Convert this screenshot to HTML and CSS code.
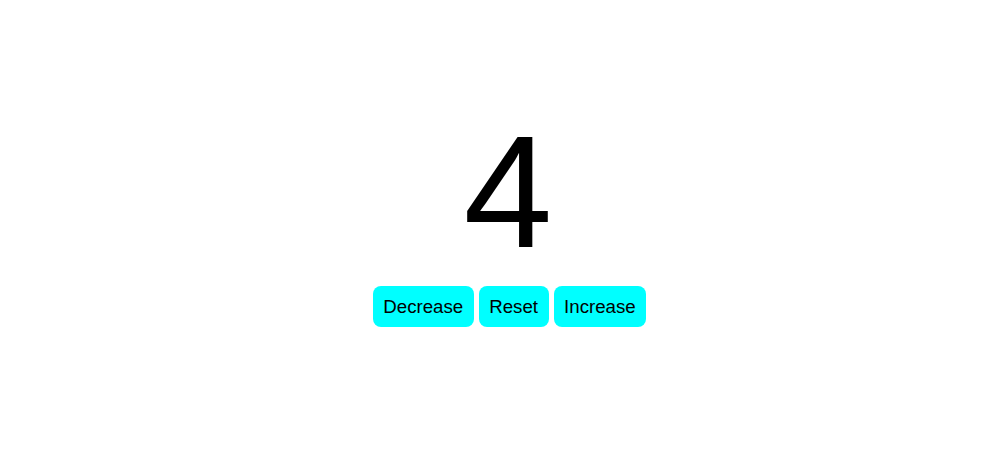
FILE: index.html
```html
<!DOCTYPE html>
<html>
<head>
<meta charset="utf-8">
<link rel="stylesheet" href="styles.css">
</head>
<body>
<div class="counter">
  <div class="value">4</div>
  <div class="buttons">
    <button class="btn">Decrease</button>
    <button class="btn">Reset</button>
    <button class="btn">Increase</button>
  </div>
</div>
</body>
</html>
```

FILE: styles.css
```css
html, body {
  margin: 0;
  padding: 0;
  background: #ffffff;
}
body {
  font-family: "Liberation Sans", Arial, sans-serif;
  color: #000;
}
.counter {
  display: flex;
  flex-direction: column;
  align-items: center;
  padding-top: 102px;
  padding-left: 32px;
}
.value {
  font-size: 160px;
  line-height: 179px;
  padding-right: 3px;
}
.buttons {
  display: flex;
  gap: 5px;
  margin-top: 5px;
}
.btn {
  font-family: "Liberation Sans", Arial, sans-serif;
  font-size: 18.7px;
  line-height: 22px;
  padding: 9.5px 10.5px;
  background: #00ffff;
  color: #000;
  border: none;
  border-radius: 8px;
}
```
